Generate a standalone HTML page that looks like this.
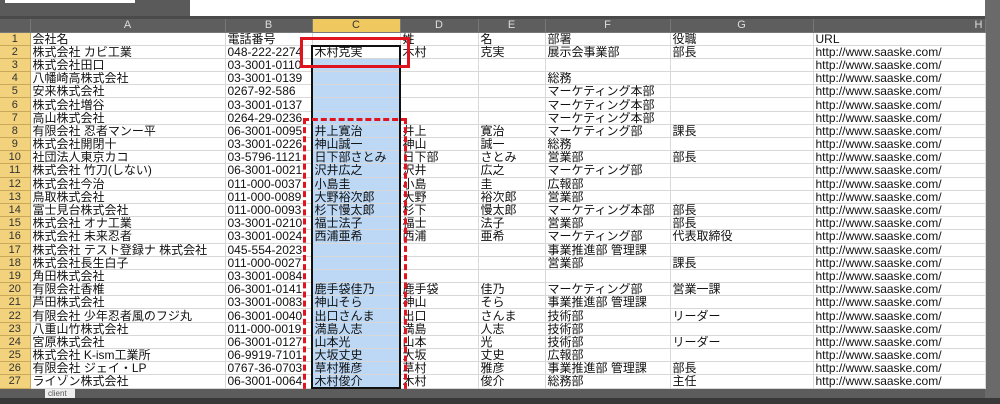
<!DOCTYPE html><html><head><meta charset="utf-8"><style>
*{margin:0;padding:0;box-sizing:border-box}
body{width:1000px;height:404px;overflow:hidden;background:#fff;position:relative;font-family:"Liberation Sans","Noto Sans CJK JP",sans-serif;font-size:12px;color:#111}
.abs{position:absolute}
table{position:absolute;left:0;top:19px;border-collapse:collapse;table-layout:fixed;width:985px}
td{height:13.2px;line-height:12px;padding:0 2px;white-space:nowrap;overflow:hidden;border-right:1px solid #d8d8d8;border-bottom:1px solid #d8d8d8;font-size:12px}
tr.h td{background:#5e5e5e;color:#ddd;text-align:center;height:13px;border-color:#777;font-size:11px}
tr.h td.sel{background:#f0c860;color:#333}
td.rh{background:#f2d27c;color:#333;text-align:center;padding:0;border-color:#c9a85a;font-size:11px}
td.c{background:#bcd8f5}
</style></head><body>
<div class="abs" style="left:0;top:0;width:190px;height:17px;background:#5a5a5a"></div>
<div class="abs" style="left:5px;top:0;width:130px;height:3px;background:#fff"></div>
<div class="abs" style="left:190px;top:0;width:795px;height:16px;background:#fff"></div>
<div class="abs" style="left:0;top:16px;width:1000px;height:3px;background:#4a4a4a"></div>
<div class="abs" style="left:985px;top:0;width:15px;height:404px;background:#6a6a6a"></div>
<table>
<colgroup><col style="width:30px"><col style="width:195px"><col style="width:87px"><col style="width:88px"><col style="width:78px"><col style="width:67px"><col style="width:125px"><col style="width:143px"><col style="width:172px"></colgroup>
<tr class="h"><td></td><td>A</td><td>B</td><td class="sel">C</td><td>D</td><td>E</td><td>F</td><td>G</td><td style="text-align:right">H</td></tr>
<tr><td class="rh">1</td><td>会社名</td><td>電話番号</td><td></td><td>姓</td><td>名</td><td>部署</td><td>役職</td><td>URL</td></tr>
<tr><td class="rh">2</td><td>株式会社 カビ工業</td><td>048-222-2274</td><td>木村克実</td><td>木村</td><td>克実</td><td>展示会事業部</td><td>部長</td><td>http://www.saaske.com/</td></tr>
<tr><td class="rh">3</td><td>株式会社田口</td><td>03-3001-0110</td><td class="c"></td><td></td><td></td><td></td><td></td><td>http://www.saaske.com/</td></tr>
<tr><td class="rh">4</td><td>八幡崎高株式会社</td><td>03-3001-0139</td><td class="c"></td><td></td><td></td><td>総務</td><td></td><td>http://www.saaske.com/</td></tr>
<tr><td class="rh">5</td><td>安来株式会社</td><td>0267-92-586</td><td class="c"></td><td></td><td></td><td>マーケティング本部</td><td></td><td>http://www.saaske.com/</td></tr>
<tr><td class="rh">6</td><td>株式会社増谷</td><td>03-3001-0137</td><td class="c"></td><td></td><td></td><td>マーケティング本部</td><td></td><td>http://www.saaske.com/</td></tr>
<tr><td class="rh">7</td><td>高山株式会社</td><td>0264-29-0236</td><td class="c"></td><td></td><td></td><td>マーケティング本部</td><td></td><td>http://www.saaske.com/</td></tr>
<tr><td class="rh">8</td><td>有限会社 忍者マンー平</td><td>06-3001-0095</td><td class="c">井上寛治</td><td>井上</td><td>寛治</td><td>マーケティング部</td><td>課長</td><td>http://www.saaske.com/</td></tr>
<tr><td class="rh">9</td><td>株式会社開閉十</td><td>03-3001-0226</td><td class="c">神山誠一</td><td>神山</td><td>誠一</td><td>総務</td><td></td><td>http://www.saaske.com/</td></tr>
<tr><td class="rh">10</td><td>社団法人東京カコ</td><td>03-5796-1121</td><td class="c">日下部さとみ</td><td>日下部</td><td>さとみ</td><td>営業部</td><td>部長</td><td>http://www.saaske.com/</td></tr>
<tr><td class="rh">11</td><td>株式会社 竹刀(しない)</td><td>06-3001-0021</td><td class="c">沢井広之</td><td>沢井</td><td>広之</td><td>マーケティング部</td><td></td><td>http://www.saaske.com/</td></tr>
<tr><td class="rh">12</td><td>株式会社今治</td><td>011-000-0037</td><td class="c">小島圭</td><td>小島</td><td>圭</td><td>広報部</td><td></td><td>http://www.saaske.com/</td></tr>
<tr><td class="rh">13</td><td>鳥取株式会社</td><td>011-000-0089</td><td class="c">大野裕次郎</td><td>大野</td><td>裕次郎</td><td>営業部</td><td></td><td>http://www.saaske.com/</td></tr>
<tr><td class="rh">14</td><td>富士見台株式会社</td><td>011-000-0093</td><td class="c">杉下慢太郎</td><td>杉下</td><td>慢太郎</td><td>マーケティング本部</td><td>部長</td><td>http://www.saaske.com/</td></tr>
<tr><td class="rh">15</td><td>株式会社 オナ工業</td><td>03-3001-0210</td><td class="c">福士法子</td><td>福士</td><td>法子</td><td>営業部</td><td>部長</td><td>http://www.saaske.com/</td></tr>
<tr><td class="rh">16</td><td>株式会社 未来忍者</td><td>03-3001-0024</td><td class="c">西浦亜希</td><td>西浦</td><td>亜希</td><td>マーケティング部</td><td>代表取締役</td><td>http://www.saaske.com/</td></tr>
<tr><td class="rh">17</td><td>株式会社 テスト登録ナ 株式会社</td><td>045-554-2023</td><td class="c"></td><td></td><td></td><td>事業推進部 管理課</td><td></td><td>http://www.saaske.com/</td></tr>
<tr><td class="rh">18</td><td>株式会社長生白子</td><td>011-000-0027</td><td class="c"></td><td></td><td></td><td>営業部</td><td>課長</td><td>http://www.saaske.com/</td></tr>
<tr><td class="rh">19</td><td>角田株式会社</td><td>03-3001-0084</td><td class="c"></td><td></td><td></td><td></td><td></td><td>http://www.saaske.com/</td></tr>
<tr><td class="rh">20</td><td>有限会社香椎</td><td>06-3001-0141</td><td class="c">鹿手袋佳乃</td><td>鹿手袋</td><td>佳乃</td><td>マーケティング部</td><td>営業一課</td><td>http://www.saaske.com/</td></tr>
<tr><td class="rh">21</td><td>芦田株式会社</td><td>03-3001-0083</td><td class="c">神山そら</td><td>神山</td><td>そら</td><td>事業推進部 管理課</td><td></td><td>http://www.saaske.com/</td></tr>
<tr><td class="rh">22</td><td>有限会社 少年忍者風のフジ丸</td><td>06-3001-0040</td><td class="c">出口さんま</td><td>出口</td><td>さんま</td><td>技術部</td><td>リーダー</td><td>http://www.saaske.com/</td></tr>
<tr><td class="rh">23</td><td>八重山竹株式会社</td><td>011-000-0019</td><td class="c">満島人志</td><td>満島</td><td>人志</td><td>技術部</td><td></td><td>http://www.saaske.com/</td></tr>
<tr><td class="rh">24</td><td>宮原株式会社</td><td>06-3001-0127</td><td class="c">山本光</td><td>山本</td><td>光</td><td>技術部</td><td>リーダー</td><td>http://www.saaske.com/</td></tr>
<tr><td class="rh">25</td><td>株式会社 K-ism工業所</td><td>06-9919-7101</td><td class="c">大坂丈史</td><td>大坂</td><td>丈史</td><td>広報部</td><td></td><td>http://www.saaske.com/</td></tr>
<tr><td class="rh">26</td><td>有限会社 ジェイ・LP</td><td>0767-36-0703</td><td class="c">草村雅彦</td><td>草村</td><td>雅彦</td><td>事業推進部 管理課</td><td>部長</td><td>http://www.saaske.com/</td></tr>
<tr><td class="rh">27</td><td>ライゾン株式会社</td><td>06-3001-0064</td><td class="c">木村俊介</td><td>木村</td><td>俊介</td><td>総務部</td><td>主任</td><td>http://www.saaske.com/</td></tr>
</table>
<div class="abs" style="left:311px;top:45px;width:90px;height:344px;border:2px solid #111"></div>
<div class="abs" style="left:300px;top:37px;width:110px;height:31px;border:3px solid #e0141e"></div>
<div class="abs" style="left:303px;top:118px;width:104px;height:280px;border:3px dashed #e0141e"></div>
<div class="abs" style="left:0;top:389px;width:985px;height:9px;background:#5c5c5c"></div>
<div class="abs" style="left:45px;top:389px;width:30px;height:9px;background:#eee;font-size:8px;line-height:9px;color:#555;padding-left:3px">client</div>
<div class="abs" style="left:0;top:398px;width:1000px;height:6px;background:#383838"></div>
</body></html>
